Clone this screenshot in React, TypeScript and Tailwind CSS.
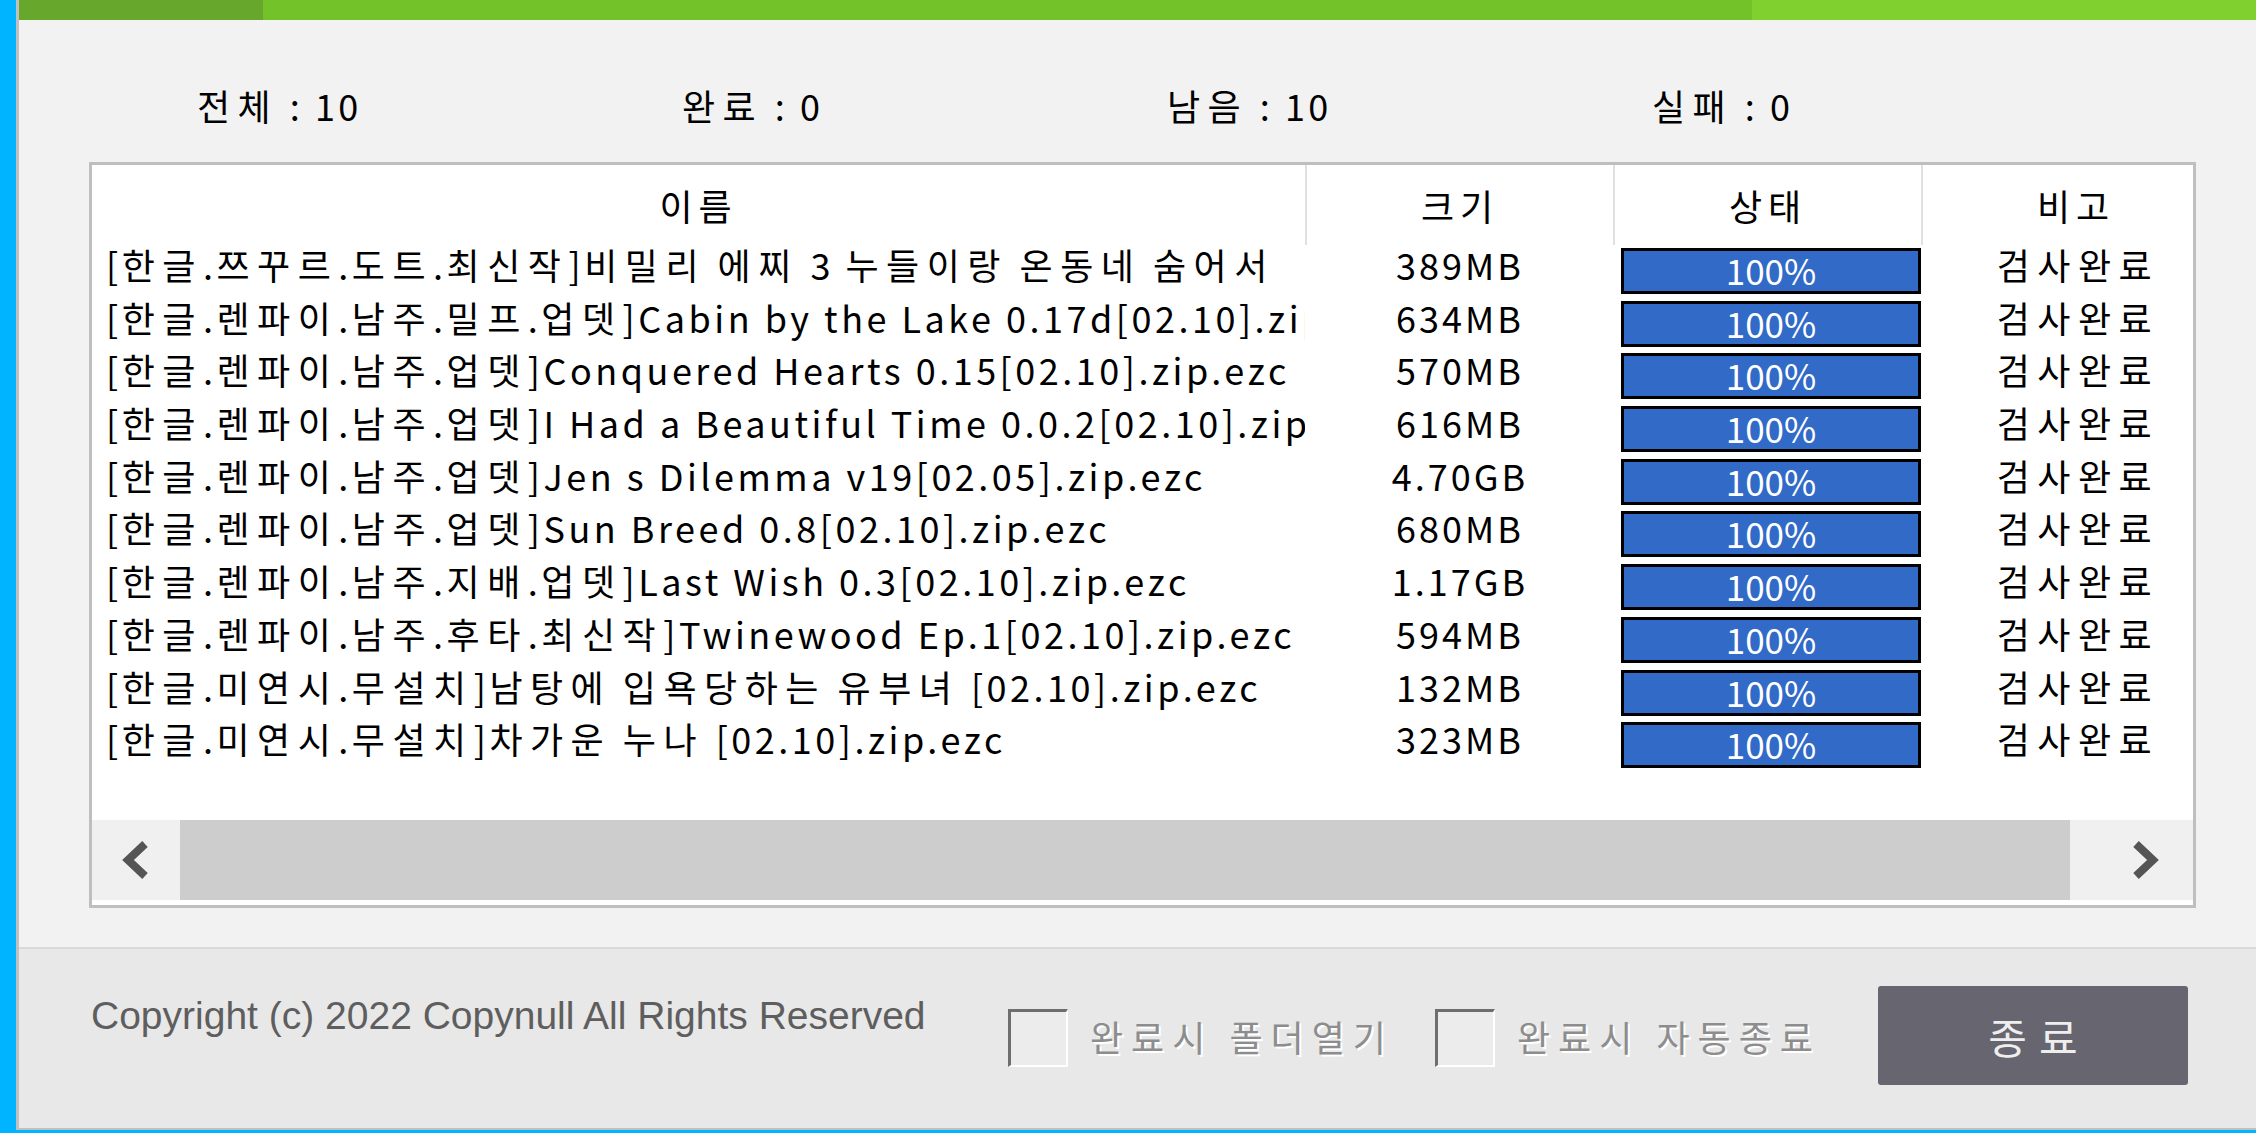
import React from 'react';

const ROWS = [
  { name: '[한글.쯔꾸르.도트.최신작]비밀리 에찌 3 누들이랑 온동네 숨어서', size: '389MB' },
  { name: '[한글.렌파이.남주.밀프.업뎃]Cabin by the Lake 0.17d[02.10].zip.ezc', size: '634MB' },
  { name: '[한글.렌파이.남주.업뎃]Conquered Hearts 0.15[02.10].zip.ezc', size: '570MB' },
  { name: '[한글.렌파이.남주.업뎃]I Had a Beautiful Time 0.0.2[02.10].zip.ezc', size: '616MB' },
  { name: '[한글.렌파이.남주.업뎃]Jen s Dilemma v19[02.05].zip.ezc', size: '4.70GB' },
  { name: '[한글.렌파이.남주.업뎃]Sun Breed 0.8[02.10].zip.ezc', size: '680MB' },
  { name: '[한글.렌파이.남주.지배.업뎃]Last Wish 0.3[02.10].zip.ezc', size: '1.17GB' },
  { name: '[한글.렌파이.남주.후타.최신작]Twinewood Ep.1[02.10].zip.ezc', size: '594MB' },
  { name: '[한글.미연시.무설치]남탕에 입욕당하는 유부녀 [02.10].zip.ezc', size: '132MB' },
  { name: '[한글.미연시.무설치]차가운 누나 [02.10].zip.ezc', size: '323MB' },
];

const STATS = ['전체 : 10', '완료 : 0', '남음 : 10', '실패 : 0'];

function Mixed({ text }: { text: string }) {
  const parts = text.split(/([가-힣]+)/).filter(Boolean);
  return (
    <>
      {parts.map((p, i) =>
        /[가-힣]/.test(p) ? (
          <span key={i} className="tracking-[7.5px]">{p}</span>
        ) : (
          <span key={i} className="tracking-[3.5px]">{p}</span>
        )
      )}
    </>
  );
}

function Checkbox() {
  return (
    <div className="mt-[60px] h-[58px] w-[60px] shrink-0 border-t-[3px] border-r-[2px] border-b-[2px] border-l-[3px] border-t-[#6e6e6e] border-r-white border-b-white border-l-[#6e6e6e] bg-[#ececec]" />
  );
}

export default function App() {
  return (
    <div className="flex h-[1133px] w-[2256px] overflow-hidden bg-[#00b4ff] pb-[3px] pl-[16px] font-['Noto_Sans_CJK_KR',sans-serif]">
      <div className="flex flex-1 flex-col border-b-[2px] border-l-[3px] border-[#c0c0c0] bg-[#f2f2f2]">
        {/* progress strip */}
        <div className="flex h-[20px] shrink-0">
          <div className="w-[244px] bg-[#67a72c]" />
          <div className="flex-1 bg-[#74c22a]" />
          <div className="w-[504px] bg-[#80d030]" />
        </div>

        <div className="h-[927px] shrink-0">
          {/* counts */}
          <div className="flex pl-[178px] pt-[63px]">
            {STATS.map(s => (
              <div key={s} className="w-[485px] text-[36px] leading-[44px] text-black">
                <Mixed text={s} />
              </div>
            ))}
          </div>

          {/* list */}
          <div className="ml-[70px] mt-[35px] flex h-[746px] w-[2107px] flex-col overflow-hidden border-[3px] border-[#bfbfbf] bg-white">
            <div className="flex h-[80px] shrink-0 text-[36px] tracking-[6px] text-black">
              <div className="flex w-[1213px] shrink-0 items-center justify-center">이름</div>
              <div className="flex w-[308px] shrink-0 items-center justify-center border-l-2 border-[#e0e0e0]">크기</div>
              <div className="flex w-[308px] shrink-0 items-center justify-center border-l-2 border-[#e0e0e0]">상태</div>
              <div className="flex w-[308px] shrink-0 items-center justify-center border-l-2 border-[#e0e0e0]">비고</div>
            </div>

            {ROWS.map(r => (
              <div key={r.name} className="flex h-[52.7px] shrink-0 text-[36px] leading-[38px] text-black">
                <div className="-mt-[7px] h-[52px] w-[1213px] shrink-0 overflow-hidden whitespace-nowrap pl-[14px] leading-[52px]">
                  <Mixed text={r.name} />
                </div>
                <div className="w-[308px] shrink-0 pl-[2px] text-center tracking-[3px]">{r.size}</div>
                <div className="w-[308px] shrink-0 pl-[8px] pt-[3px]">
                  <div className="h-[46px] w-[300px] border-[3px] border-black bg-[#326ac8] text-center text-[35px] leading-[38px] text-white">
                    100%
                  </div>
                </div>
                <div className="w-[308px] shrink-0 pl-[6px] text-center tracking-[7.5px]">검사완료</div>
              </div>
            ))}

            <div className="flex-1" />

            {/* horizontal scrollbar */}
            <div className="flex h-[80px] shrink-0">
              <div className="flex w-[88px] items-center bg-[#f0f0f0] pl-[27px]">
                <svg width="32" height="38" viewBox="0 0 32 38">
                  <polyline points="26,3 9,19 26,35" fill="none" stroke="#555555" strokeWidth="8" />
                </svg>
              </div>
              <div className="flex-1 bg-[#cdcdcd]" />
              <div className="flex w-[123px] items-center justify-end bg-[#f0f0f0] pr-[31px]">
                <svg width="32" height="38" viewBox="0 0 32 38">
                  <polyline points="6,3 23,19 6,35" fill="none" stroke="#555555" strokeWidth="8" />
                </svg>
              </div>
            </div>
            <div className="h-[5px] shrink-0" />
          </div>
        </div>

        {/* footer */}
        <div className="flex flex-1 items-start border-t-2 border-[#d9d9d9] bg-[#e8e8e8] pl-[72px]">
          <div className="mt-[45px] w-[917px] shrink-0 whitespace-nowrap font-['Liberation_Sans',sans-serif] text-[39px] leading-[44px] text-[#5e5e5e]">
            Copyright (c) 2022 Copynull All Rights Reserved
          </div>
          <Checkbox />
          <div className="ml-[22px] mt-[65px] w-[345px] shrink-0 whitespace-nowrap text-[36px] leading-[44px] tracking-[8px] text-[#8d8d8d] [text-shadow:2px_2px_0_#ffffff]">
            완료시 폴더열기
          </div>
          <Checkbox />
          <div className="ml-[22px] mt-[65px] w-[361px] shrink-0 whitespace-nowrap text-[36px] leading-[44px] tracking-[8px] text-[#8d8d8d] [text-shadow:2px_2px_0_#ffffff]">
            완료시 자동종료
          </div>
          <button className="mt-[37px] flex h-[99px] w-[310px] shrink-0 items-center justify-center rounded-[3px] bg-[#666570] pl-[12px] text-[42px] tracking-[12px] text-[#eeeeee]">
            종료
          </button>
        </div>
      </div>
    </div>
  );
}
